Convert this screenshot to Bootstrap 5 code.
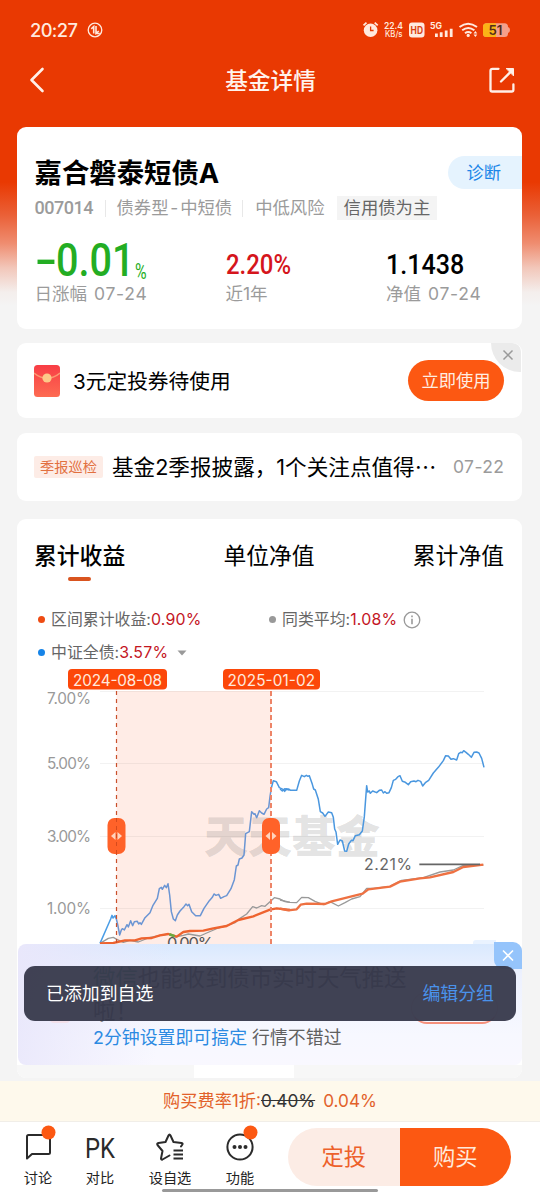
<!DOCTYPE html>
<html lang="zh-CN">
<head>
<meta charset="utf-8">
<meta name="viewport" content="width=device-width, initial-scale=1">
<title>基金详情</title>
<link href="https://cdn.jsdelivr.net/npm/bootstrap@5.3.0/dist/css/bootstrap.min.css" rel="stylesheet">
<style>
:root{--cjk:"Noto Sans CJK SC";--brand:#fc5812}
body{font-family:Inter,var(--cjk),sans-serif;font-weight:370;background:#f4f4f4;color:#111;line-height:1;height:1194px;overflow:hidden;font-size:17.3px}
svg{display:block;flex:none}
svg text{font-family:Inter,var(--cjk),sans-serif}
.page-top{background:linear-gradient(#e93902 0,#e93902 182px,#ea6037 215px,#ef8c6f 243px,#f2c7ba 268px,#f4eeec 292px,#f4f4f4 306px);height:1081px}
.status{height:60px;padding:0 30px 0 30px;color:#ffeadf}
.clock{font-size:18.3px;font-weight:500;letter-spacing:-.6px}
.title-bar{height:67px;padding:0 25px 27px 28px;color:#fff3ec}
.title-bar h1{font-size:22.7px;font-weight:500;position:relative;left:-1px;top:1px}
.panel{background:#fff;border-radius:9px;margin:0 18px 0 17px;position:relative}
.fund{height:202px;padding:31px 0 0 17.5px}
.fund h2{font-size:27.4px;line-height:30px;font-weight:700;color:#000}
.diag{width:74.5px;height:33px;border-radius:17px 0 0 17px;background:#e5f3fe;color:#1c86e8;padding-left:19px;margin-top:-2px}
.meta{height:24px;margin-top:7px;color:#9b9b9b;font-size:17.35px}
.code{font:500 18px/1 Roboto,sans-serif;width:58px;white-space:nowrap;letter-spacing:-.5px}
.rule{width:1px;height:17px;background:#e8e8e8}
.hy{letter-spacing:1.8px}
.pill-grey{background:#f4f4f4;color:#666;height:24px;padding:0 7px}
.figures{display:grid;grid-template-columns:191px 160.5px 1fr;margin-top:11px}
.num{height:48px;display:flex;align-items:flex-end;font-family:Roboto,sans-serif;font-weight:500;white-space:nowrap}
.num span{transform-origin:0 100%;display:inline-block;line-height:1}
.n-big{font-size:46px;transform:scaleX(.86);color:#23ad23;width:99px;height:46px;display:flex!important;margin-bottom:-4px}
.n-big i{font-style:normal;transform:scaleX(1.65);transform-origin:0 0;width:24.5px;flex:none}
.n-mid{font-size:28.5px}
.lbl{color:#9b9b9b;line-height:20px;font-size:17.5px}
.figures .lbl{margin-top:5px}
.wide{letter-spacing:.7px;margin-left:1.5px}
.coupon{height:75px;margin-top:14px;padding:0 18px 0 17px}
.coupon .txt{font-size:20.7px;margin-left:13px;padding-top:3px;color:#000}
.btn-use{background:var(--brand);color:#ffeee2;border-radius:21px;width:96px;height:41px;font-size:17.3px;line-height:41px;padding:0;border:0}
.corner{position:absolute;right:1px;top:0;width:30px;height:29px;background:#ebebeb;border-radius:0 9px 0 30px}
.report{height:68px;margin-top:15px;padding:0 17px 0 17px}
.tag-red{background:#fdece6;color:#e2703f;font-size:14.2px;height:22px;width:69px;border-radius:2px}
.report .txt{font-size:21.6px;margin-left:9px;width:341px;white-space:nowrap;color:#000}
.chart{height:559px;margin-top:18px;background:#fff}
.tabs{height:75px;padding:0 18px 0 17px;font-size:22.8px;color:#000}
.tabs .on{font-weight:500;position:relative}
.tabs .on i{position:absolute;left:34px;top:32px;width:23px;height:4px;border-radius:2px;background:#d9541f}
.legend{display:grid;grid-template-columns:231px 1fr;padding:9px 21px 0;row-gap:0;font-size:15.9px;color:#666;height:75px}
.legend>div{height:33px}
.dot{width:7px;height:7px;border-radius:50%;margin-right:6px}
.red{color:#c4161f;letter-spacing:.2px;font-weight:400}
.promo{height:121px;margin-left:1px;border-radius:8px;background:linear-gradient(100deg,#e9e7fb 0,rgba(233,231,251,0) 30%),linear-gradient(#d9e9fe 0,#edf1fe 25%,#f7f8ff 75%,#f9f8ff);position:relative;padding:17px 0 0 75px}
.promo .big{font-size:22.4px;line-height:33px;color:#333;width:330px}
.promo .sub{font-size:17.9px;line-height:20px;margin-top:1px;color:#606060}
.toast-bar{position:absolute;left:7px;top:447px;width:492px;height:55px;border-radius:11px;background:rgba(56,58,77,.96);color:#fff;padding:0 22px;font-size:17.9px}
.promo-x{position:absolute;right:0;top:-2px;width:28px;height:27px;background:#95c4fb;border-radius:0 9px 0 9px}
.promo-btn{position:absolute;left:393px;top:48px;width:87px;height:32px;border:1px solid #f9c9be;border-bottom:2px solid #f5907c;border-radius:16px}
.under{height:13px;background:#f7f7f7;border-radius:0 0 9px 9px}
.under i{display:block;width:100px;height:13px;background:#fff;margin-left:177px}
.fee{height:41px;background:#fef9ec;color:#e2612a;font-size:17.2px;border-bottom:1px solid #f1eee8}
.bottom{height:72px;background:#fff;position:relative}
.nav-i{width:62px;position:absolute;font-size:14.2px;color:#222;text-align:center;top:5px}
.nav-i svg{margin:0 auto;overflow:visible}
.nav-i b{display:block;font-weight:370;margin-top:6px;line-height:16px}
.acts{position:absolute;left:288px;top:6px;width:223px;height:58px;border-radius:29px;overflow:hidden;font-size:22.3px;font-weight:400}
.home{position:absolute;left:162px;top:67px;width:216px;height:3px;border-radius:2px;background:#999}
</style>
</head>
<body>
<div class="page-top">
  <div class="status d-flex align-items-center justify-content-between">
    <div class="d-flex align-items-center"><span class="clock">20:27</span>
      <svg style="margin-left:10px" width="16" height="16" viewBox="0 0 16 16" fill="none" stroke="#ffeadf" stroke-width="1.3"><circle cx="8" cy="8" r="6.8"/><path d="M4.3 6.8 6.7 4.5V11.5M9 4v7.3L11.8 9M9.2 11.5h3.6" stroke-width="1.6"/></svg>
    </div>
    <svg width="148" height="20" viewBox="362 20 148 20" fill="#ffeadf" role="img">
      <circle cx="370.6" cy="30.2" r="6.8"/><path d="M363.5 25.3l3-2.7M377.7 25.3l-3-2.7" stroke="#ffeadf" stroke-width="1.8"/><path d="M370.6 26.5v4h3" fill="none" stroke="#e93902" stroke-width="1.3"/>
      <text x="384" y="29" font-size="9" font-weight="600" textLength="19" lengthAdjust="spacingAndGlyphs">22.4</text><text x="385" y="37" font-size="8.3" font-weight="500" textLength="17.500" lengthAdjust="spacingAndGlyphs">KB/s</text>
      <rect x="409" y="22.5" width="15.5" height="15" rx="3"/><text x="410.6" y="33.6" font-size="10" font-weight="700" textLength="12.4" lengthAdjust="spacingAndGlyphs" style="fill:#d94010">HD</text>
      <text x="430" y="29" font-size="9" font-weight="700" textLength="12" lengthAdjust="spacingAndGlyphs">5G</text>
      <path d="M435 33.5h2.8v3.5H435zM439.8 32.3h2.8V37h-2.8zM444.8 30.5h2.8V37h-2.8zM449.8 28.8h2.8V37h-2.8z"/>
      <g fill="none" stroke="#ffeadf" stroke-width="2"><path d="M459.5 27q8.5-6.6 17.5 0M462.2 30.3q6-4.6 12.2 0M465 33.2q3.2-2.4 6.4 0"/></g><circle cx="468.2" cy="35.4" r="1.6"/><path d="M473.5 33.5l1.9-2.6 1.9 2.6zM473.5 34.5l1.9 2.6 1.9-2.6z"/>
      <rect x="483" y="23.3" width="25" height="13.7" rx="3.5" fill="#f5a08b"/><path d="M486.500 23.300H496v13.700h-9.500a3.500 3.500 0 0 1-3.500-3.500v-6.700a3.500 3.500 0 0 1 3.500-3.500z" fill="#fbb416"/><path d="M508 27q2 .5 2 3t-2 3z" fill="#f5a08b"/>
      <text x="488.500" y="34.7" font-size="12.5" font-weight="600" textLength="14" lengthAdjust="spacingAndGlyphs" style="fill:#512b1d">51</text>
    </svg>
  </div>
  <header class="title-bar d-flex align-items-center justify-content-between">
    <svg width="18" height="28" viewBox="0 0 18 28" fill="none" stroke="#fff0e8" stroke-width="2.6" stroke-linecap="round" stroke-linejoin="round"><path d="M14.500 3 3.500 14 14.500 25"/></svg>
    <h1 class="m-0 ms-2">基金详情</h1>
    <svg width="26" height="26" viewBox="0 0 26 26" fill="none" stroke="#fff0e8" stroke-width="2.3" stroke-linecap="round" stroke-linejoin="round"><path d="M9.500 1.800H3.500Q1.500 1.800 1.500 3.800v19q0 1.700 1.700 1.700h19.500q1.700 0 1.700-1.700V17.500M12 14.500 23.500 3"/><path d="M17.500 1.500h7v7z" fill="#fff0e8" stroke-width="1"/></svg>
  </header>

  <section class="panel fund">
    <div class="d-flex justify-content-between"><h2 class="m-0">嘉合磐泰短债A</h2><div class="diag d-flex align-items-center">诊断</div></div>
    <div class="meta d-flex align-items-center"><span class="code">007014</span><i class="rule" style="margin:0 11px 0 12px"></i><span>债券<span class="hy">型-</span>中短债</span><i class="rule" style="margin:0 12px 0 10px"></i><span>中低风险</span><span class="pill-grey d-flex align-items-center" style="margin-left:12px">信用债为主</span></div>
    <div class="figures">
      <div><div class="num"><span class="n-big"><i>-</i>0.01</span><span style="color:#23ad23;font-size:22px;font-weight:400;transform:scaleX(.72);margin:0 0 -4px 1px">%</span></div><div class="lbl">日涨幅<span class="wide"> 07-24</span></div></div>
      <div><div class="num"><span class="n-mid" style="color:#d5151c;transform:scaleX(.84)">2.20%</span></div><div class="lbl">近1年</div></div>
      <div><div class="num"><span class="n-mid" style="color:#000;transform:scaleX(.88)">1.1438</span></div><div class="lbl">净值<span class="wide"> 07-24</span></div></div>
    </div>
  </section>

  <section class="panel coupon d-flex align-items-center">
    <svg width="26" height="32" viewBox="0 0 26 32"><defs><linearGradient id="env" x2="0" y2="1"><stop stop-color="#f83d45"/><stop offset="1" stop-color="#fd6b52"/></linearGradient></defs><rect width="26" height="32" rx="3.5" fill="url(#env)"/><path d="M0 8q13 10.500 26 0" fill="none" stroke="#fb9a72" stroke-width="1.400"/><circle cx="13" cy="13" r="4.600" fill="#fdc988"/></svg>
    <span class="txt me-auto">3元定投券待使用</span>
    <button class="btn btn-use" type="button">立即使用</button>
    <div class="corner"><svg width="30" height="29" viewBox="0 0 30 29" stroke="#999" stroke-width="1.500"><path d="M12.500 7.500l9 9M21.500 7.500l-9 9"/></svg></div>
  </section>

  <section class="panel report d-flex align-items-center">
    <span class="tag-red d-flex align-items-center justify-content-center">季报巡检</span>
    <span class="txt">基金2季报披露，1个关注点值得<span style="font-family:var(--cjk)">…</span></span>
    <span class="lbl" style="letter-spacing:.4px">07-22</span>
  </section>

  <section class="panel chart">
    <div class="tabs d-flex align-items-center justify-content-between"><span class="on">累计收益<i></i></span><span>单位净值</span><span>累计净值</span></div>
    <div class="legend">
      <div class="d-flex align-items-center"><i class="dot" style="background:#ee4b12"></i>区间累计收益:<span class="red">0.90%</span></div>
      <div class="d-flex align-items-center"><i class="dot" style="background:#999"></i>同类平均:<span class="red">1.08%</span><svg style="margin-left:6px" width="18" height="18" viewBox="0 0 18 18" fill="none" stroke="#999" stroke-width="1.300"><circle cx="9" cy="9" r="7.800"/><path d="M9 7.800v5.500M9 4.500v1.800" stroke-width="1.600"/></svg></div>
      <div class="d-flex align-items-center"><i class="dot" style="background:#1684e8"></i>中证全债:<span class="red">3.57%</span><svg style="margin-left:9px" width="11" height="6" viewBox="0 0 11 6"><path d="M.5.500h9L5 5.500z" fill="#999"/></svg></div>
    </div>
    <svg width="505" height="275" viewBox="17 669 505 275">
      <rect x="116.500" y="691" width="154.500" height="253" fill="#ffece6"/>
      <path d="M100 691.500H484M100 763.500H484M100 836.500H484M100 908.500H484" stroke="#000" stroke-opacity=".05"/>
      <text x="204" y="852.500" font-size="44" font-weight="900" fill="#555" fill-opacity=".18" textLength="176">天天基金</text>
      <g font-size="15.300" fill="#999"><text x="47" y="704" textLength="44">7.00%</text><text x="47" y="769" textLength="44">5.00%</text><text x="47" y="841.500" textLength="44">3.00%</text><text x="47" y="914" textLength="44">1.00%</text></g>
      <text x="167" y="949" font-size="16.500" fill="#555" textLength="47">0.00%</text>
      <g fill="none" stroke-linejoin="round">
        <g transform="translate(80 735) scale(.33333)">
          <path stroke="#999" stroke-width="4" d="M60 625 85 610 100 607 112 614 130 622 150 616 175 621 205 609 240 601 265 597 285 606 310 601 325 597 360 603 380 594 415 579 440 572 465 563 480 550 500 537 518 515 530 519 545 512 555 514 570 500 583 488 600 492 615 500 630 502"/>
          <path stroke="#4a9de6" stroke-width="4.500" d="M60 625 92 552 96 541 99 549 105 542 109 552"/>
          <path stroke="#6b95d3" stroke-width="4.500" d="M109 552 113 568 119 600 124 585 127 581 133 585 141 569 145 576 152 557 158 572 163 560 172 559 176 567 180 563 184 568 195 548 210 533 219 511 232 490 238 461 244 457 247 463 254 451 259 458 264 446 269 480 274 530 280 552 286 557 292 540 300 528 312 515 318 507 323 512 327 508 335 530 347 542 361 542 372 520 388 497 397 487 402 477 408 481 416 478 422 490 432 485 440 482 453 461 463 434 469 393 474 390 478 372 486 369 492 360 497 296 508 290 515 230 522 238 525 236 530 248 538 227 545 234 552 238 560 222 566 218 570 185 574 159"/>
          <path stroke="#4a97df" stroke-width="4.500" d="M574 159 580 137 589 140 598 158 609 163 614 169 620 161 626 165 630 163"/>
          <path stroke="#ee632f" stroke-width="7" d="M60 625 100 624 135 616 165 616 185 610 215 609 240 601 265 597 290 605 310 591 330 588 370 587 400 580 440 573 475 555 520 544 570 524 590 520 630 525"/>
          <path stroke="#6aaa3e" stroke-width="8" d="M268 598 284 604"/>
        </g>
        <g transform="translate(280 735) scale(.33333)">
          <path stroke="#999" stroke-width="4" d="M0 495 30 502 50 503 65 487 85 488 105 499 130 509 150 500 175 513 195 503 215 492 240 485 260 460 280 460 330 454 365 436 430 428 480 411 520 405 550 391 610 390"/>
          <path stroke="#4a97df" stroke-width="4.500" d="M0 162 7 168 15 161 20 164 26 162 32 166 50 166 58 138 65 121 73 125 79 121 84 124 88 122 97 148 101 162 106 165 115 193 121 230 128 234 135 244 145 231 155 233 160 247 164 282 168 291 173 328 180 315 187 318 194 348 200 349 206 327 214 316 219 317 226 302 238 299 247 288 253 245 260 152 263 171 268 168 271 175 278 168 290 173 298 166 305 165 310 174 315 170 320 175 327 173 334 158 340 136 347 133 354 125 360 122 367 139 376 142 385 149 392 140 402 138 408 140 414 136 422 139 428 153 436 143 446 136 460 114 475 97 490 77 497 62 505 63 513 73 520 71 530 75 536 56 542 52 547 53 551 47 558 52 565 58 574 67 582 52 590 51 597 54 605 70 612 97"/>
          <path stroke="#ee7142" stroke-width="7" d="M0 521 25 526 50 523 62 509 80 506 135 507 155 499 200 488 248 476 265 463 330 455 360 440 420 430 450 427 520 411 550 396 610 389"/>
          <path stroke="#666" stroke-width="5" d="M418 388H600"/>
        </g>
        <path d="M116.500 691V944" stroke="#c9502c" stroke-width="1.200" stroke-dasharray="4 4"/><path d="M271 691V944" stroke="#ed8467" stroke-width="2" stroke-dasharray="5 3"/>
      </g>
      <text x="364" y="870" font-size="15.800" fill="#666" textLength="48">2.21%</text>
      <g fill="#fc4709"><rect x="68" y="669" width="99" height="20.500" rx="4"/><rect x="223" y="669" width="97" height="20.500" rx="4"/></g>
      <g font-size="15.300" font-weight="400" fill="#ffe9de"><text x="73" y="685.500" textLength="89">2024-08-08</text><text x="227.500" y="685.500" textLength="87.500">2025-01-02</text></g>
      <g fill="#ff6229"><rect x="107.500" y="818" width="18" height="36" rx="7"/><rect x="262" y="818" width="18" height="36" rx="7"/></g>
      <path d="M115.500 832v8l-4.500-4zM117.500 832v8l4.500-4zM270 832v8l-4.500-4zM272 832v8l4.500-4z" fill="#ffd3bd"/>
      <path d="M116.500 818v36" stroke="#d64a1c" stroke-dasharray="4 4"/>
      <path d="M473 944v-1q0-3 3-3h20v4z" fill="#eaf3ff"/>
    </svg>
    <div class="promo">
      <svg style="position:absolute;left:28px;top:43px" width="28" height="38" viewBox="0 0 28 38"><rect x="4" y="5" width="20" height="31" rx="4" fill="#f3e0ea"/></svg>
      <div class="big"><span style="color:#27936b">微信</span>也能收到债市实时天气推送啦！</div>
      <div class="sub"><span style="color:#2b8ae2">2分钟设置即可搞定</span> 行情不错过</div>
      <div class="promo-btn"></div>
      <div class="promo-x"><svg width="28" height="27" viewBox="0 0 28 27" stroke="#fff" stroke-width="1.600"><path d="M9 8.500l10 10M19 8.500l-10 10"/></svg></div>
    </div>
    <div class="under"><i></i></div>
    <div class="toast-bar d-flex align-items-center justify-content-between"><span>已添加到自选</span><span style="color:#4a92eb">编辑分组</span></div>
  </section>
</div>
<div class="fee d-flex align-items-center justify-content-center"><span>购买费率1折:<s style="color:#333">0.40%</s></span><span class="ms-2">0.04%</span></div>
<nav class="bottom">
  <div class="nav-i" style="left:7px"><svg width="30" height="37" viewBox="0 0 30 37" fill="none" stroke="#2b2b2b" stroke-width="2" stroke-linejoin="round"><path d="M4 9.500q0-1.500 1.500-1.500H25.500q1.500 0 1.500 1.500V25.500q0 1.500-1.500 1.500H9l-5 4.500z"/><circle cx="25.500" cy="5.500" r="7" fill="#fc5812" stroke="none"/></svg><b>讨论</b></div>
  <div class="nav-i" style="left:69px"><svg width="30" height="37" viewBox="0 0 30 37"><text x="0" y="31" font-size="28" font-weight="400" textLength="30" lengthAdjust="spacingAndGlyphs" fill="#2b2b2b" style="font-family:Roboto">PK</text></svg><b>对比</b></div>
  <div class="nav-i" style="left:139px"><svg width="30" height="37" viewBox="0 0 30 37" fill="none" stroke="#2b2b2b" stroke-width="2" stroke-linejoin="round" stroke-linecap="round"><path d="M14.500 28.500 7.500 32.500Q6 33 6 31.500L7.500 24 2.500 18Q1.500 16.500 3.500 16L10.500 15 13.500 8.500Q14.500 6.500 15.500 8.500L18.500 15 26.500 16Q28.500 16.500 27 18L26 19.500" /><path d="M18.500 23.500h9.500M18.500 27.500h9.500M18.500 31.500h9.500" stroke-linecap="butt"/></svg><b>设自选</b></div>
  <div class="nav-i" style="left:209px"><svg width="30" height="37" viewBox="0 0 30 37" fill="#2b2b2b"><circle cx="15" cy="20" r="12.600" fill="none" stroke="#2b2b2b" stroke-width="2"/><circle cx="9.500" cy="20" r="2"/><circle cx="15" cy="20" r="2"/><circle cx="20.500" cy="20" r="2"/><circle cx="25.500" cy="5.500" r="7" fill="#fc5812"/></svg><b>功能</b></div>
  <div class="acts d-flex"><div class="w-50 d-flex align-items-center justify-content-center" style="background:#fcece5;color:#ed612b">定投</div><div class="w-50 d-flex align-items-center justify-content-center" style="background:#fc5812;color:#ffeadb">购买</div></div>
  <div class="home"></div>
</nav>
<script src="https://cdn.jsdelivr.net/npm/bootstrap@5.3.0/dist/js/bootstrap.bundle.min.js"></script>
</body>
</html>
